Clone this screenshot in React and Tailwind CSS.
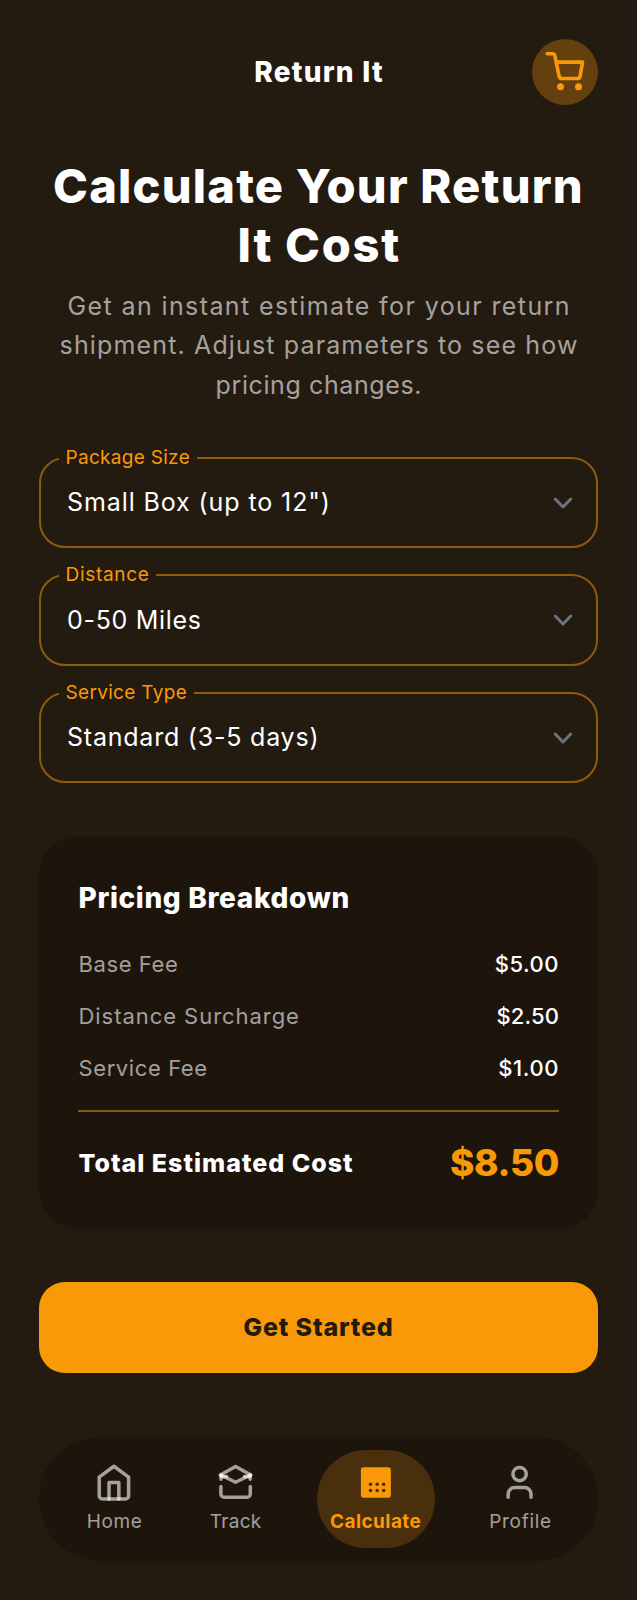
const fields = [
  { label: "Package Size", value: 'Small Box (up to 12")', labelTrack: "tracking-[0.3px]", valueTrack: "tracking-[0.9px]" },
  { label: "Distance", value: "0-50 Miles", labelTrack: "tracking-[0.7px]", valueTrack: "tracking-[0.7px]" },
  { label: "Service Type", value: "Standard (3-5 days)", labelTrack: "tracking-[0.32px]", valueTrack: "tracking-[0.78px]" },
];

const fees = [
  { name: "Base Fee", price: "$5.00", nameTrack: "tracking-[0.6px]", priceTrack: "tracking-[0.5px]" },
  { name: "Distance Surcharge", price: "$2.50", nameTrack: "tracking-[0.95px]", priceTrack: "tracking-[0.1px]" },
  { name: "Service Fee", price: "$1.00", nameTrack: "tracking-[0.6px]", priceTrack: "tracking-[0.6px]" },
];

function CartIcon() {
  return (
    <svg className="size-[66px]" viewBox="0 0 66 66" fill="none" stroke="#fa9908" strokeWidth="3.6" strokeLinecap="round" strokeLinejoin="round">
      <path d="M15.2 14.7h6c.9 0 1.3.5 1.5 1.3l4.3 20.6c.3 1.9 1.2 2.9 2.9 2.9h15.5c1.5 0 2.4-.8 2.7-2.4l2.4-14H24.3" />
      <circle cx="28.5" cy="47.7" r="3.5" fill="#fa9908" stroke="none" />
      <circle cx="46.5" cy="47.7" r="3.5" fill="#fa9908" stroke="none" />
    </svg>
  );
}

function NavSvg({ children }) {
  return (
    <svg className="size-[39.2px] text-white/60" viewBox="0 0 24 24" fill="none" stroke="currentColor" strokeWidth="2.15" strokeLinecap="round" strokeLinejoin="round">
      {children}
    </svg>
  );
}

function HomeIcon() {
  return (
    <NavSvg>
      <path d="M3.2 8.6 12.2 2l9 6.6V20a2 2 0 0 1-2 2h-14a2 2 0 0 1-2-2z" />
      <path d="M9.2 22V12h6v10" />
    </NavSvg>
  );
}

function TrackIcon() {
  return (
    <NavSvg>
      <path d="M2.6 7.3 12 2.1l9.4 5.2" />
      <path d="M3.2 7.5 12 11.8l8.8-4.3" />
      <path d="M3.1 7.3v2.6M20.9 7.3v2.6" />
      <path d="M3.2 8.3h3.4M20.8 8.3h-3.4" />
      <path d="M3 14.4V19a2 2 0 0 0 2 2h14a2 2 0 0 0 2-2v-4.6" />
    </NavSvg>
  );
}

function CalculateIcon() {
  return (
    <svg className="size-[39.2px]" viewBox="0 0 39.2 39.2">
      <rect x="4.9" y="4.3" width="30" height="30.4" rx="2.8" fill="#fa9908" />
      <g fill="#4a2e0c">
        {[14.5, 21.2, 27.7].map((x) => (
          <g key={x}>
            <circle cx={x} cy="21.3" r="1.75" />
            <circle cx={x} cy="27.6" r="1.75" />
          </g>
        ))}
      </g>
    </svg>
  );
}

function ProfileIcon() {
  return (
    <NavSvg>
      <circle cx="12" cy="6.8" r="4.1" />
      <path d="M5 21v-2a4 4 0 0 1 4-4h6a4 4 0 0 1 4 4v2" />
    </NavSvg>
  );
}

const nav = [
  { label: "Home", Icon: HomeIcon, box: "w-[80px] text-white/60", track: "tracking-[0.6px] pl-[1px]" },
  { label: "Track", Icon: TrackIcon, box: "w-[78px] text-white/60", track: "tracking-[0.3px] pl-[0.6px]" },
  { label: "Calculate", Icon: CalculateIcon, box: "w-[118px] bg-[#fa9908]/20 text-[#fa9908] font-bold", track: "tracking-[0.4px]" },
  { label: "Profile", Icon: ProfileIcon, box: "w-[86px] text-white/60", track: "tracking-[0.7px] pl-[1px]" },
];

export default function App() {
  return (
    <div className="flex h-[1600px] w-full flex-col bg-[#231a10] px-[39px] pt-[39px] font-['Inter',sans-serif] whitespace-nowrap text-white">
      <header className="grid h-[66px] shrink-0 grid-cols-[66px_1fr_66px] items-center">
        <span />
        <h2 className="pl-[1px] text-center text-[28px] font-extrabold tracking-[1.25px]">Return It</h2>
        <button className="size-[66px] rounded-full bg-[#fa9908]/30">
          <CartIcon />
        </button>
      </header>

      <section className="mt-[51px] text-center">
        <h1 className="text-[47px] leading-[59px] font-extrabold">
          <span className="block tracking-[1.2px]">Calculate Your Return</span>
          <span className="block pl-[1.4px] tracking-[1.7px]">It Cost</span>
        </h1>
        <p className="mt-[13px] text-[25px] leading-[39.25px] text-white/60">
          <span className="block pl-[1.4px] tracking-[1.4px]">Get an instant estimate for your return</span>
          <span className="block pl-[1.1px] tracking-[1.14px]">shipment. Adjust parameters to see how</span>
          <span className="block pl-[0.6px] tracking-[0.6px]">pricing changes.</span>
        </p>
      </section>

      <div className="mt-[52px] flex shrink-0 flex-col gap-[26px]">
        {fields.map((f) => (
          <div key={f.label} className="relative flex h-[91.5px] items-center justify-between rounded-[26px] border-2 border-[#fa9908]/50 pr-[23px] pl-[26px]">
            <span className={`absolute -top-[11px] left-[18px] h-[20px] bg-[#231a10] pr-[6.5px] pl-[6.5px] text-[19px] leading-[20px] text-[#fa9908] ${f.labelTrack}`}>{f.label}</span>
            <span className={`text-[25px] leading-[39px] ${f.valueTrack}`}>{f.value}</span>
            <svg className="h-[14px] w-[20px]" viewBox="0 0 20 14" fill="none" stroke="#6b7280" strokeWidth="3" strokeLinecap="round" strokeLinejoin="round">
              <path d="M2.2 3 10 11l7.8-8" />
            </svg>
          </div>
        ))}
      </div>

      <section className="mt-[52.5px] flex h-[393px] shrink-0 flex-col rounded-[39px] bg-[#1d150c] px-[39px] pt-[42px]">
        <h3 className="pl-[0.5px] text-[28px] leading-[40px] font-extrabold tracking-[0.65px]">Pricing Breakdown</h3>
        <div className="mt-[20px] text-[22px] leading-[52px]">
          {fees.map((f) => (
            <div key={f.name} className="flex justify-between">
              <span className={`pl-[0.5px] text-white/60 ${f.nameTrack}`}>{f.name}</span>
              <span className={`font-medium ${f.priceTrack}`}>{f.price}</span>
            </div>
          ))}
        </div>
        <div className="mt-[16px] flex h-[105px] items-center justify-between border-t-2 border-[#fa9908]/50">
          <span className="pl-[0.5px] text-[25px] leading-[40px] font-extrabold tracking-[1px]">Total Estimated Cost</span>
          <span className="text-[37px] leading-[40px] font-extrabold tracking-[-0.4px] text-[#fa9908]">$8.50</span>
        </div>
      </section>

      <button className="mt-[53px] h-[91px] shrink-0 rounded-[26px] bg-[#fa9908] text-[25px] font-extrabold tracking-[0.85px] text-[#231a10]">Get Started</button>

      <nav className="mt-[64px] flex h-[124px] shrink-0 items-center justify-between rounded-full bg-[#1d150c] px-[35px]">
        {nav.map(({ label, Icon, box, track }) => (
          <a key={label} className={`flex h-[98px] flex-col items-center rounded-full pt-[13px] ${box}`}>
            <Icon />
            <span className={`mt-[7px] text-[19px] leading-[26px] ${track}`}>{label}</span>
          </a>
        ))}
      </nav>
    </div>
  );
}
